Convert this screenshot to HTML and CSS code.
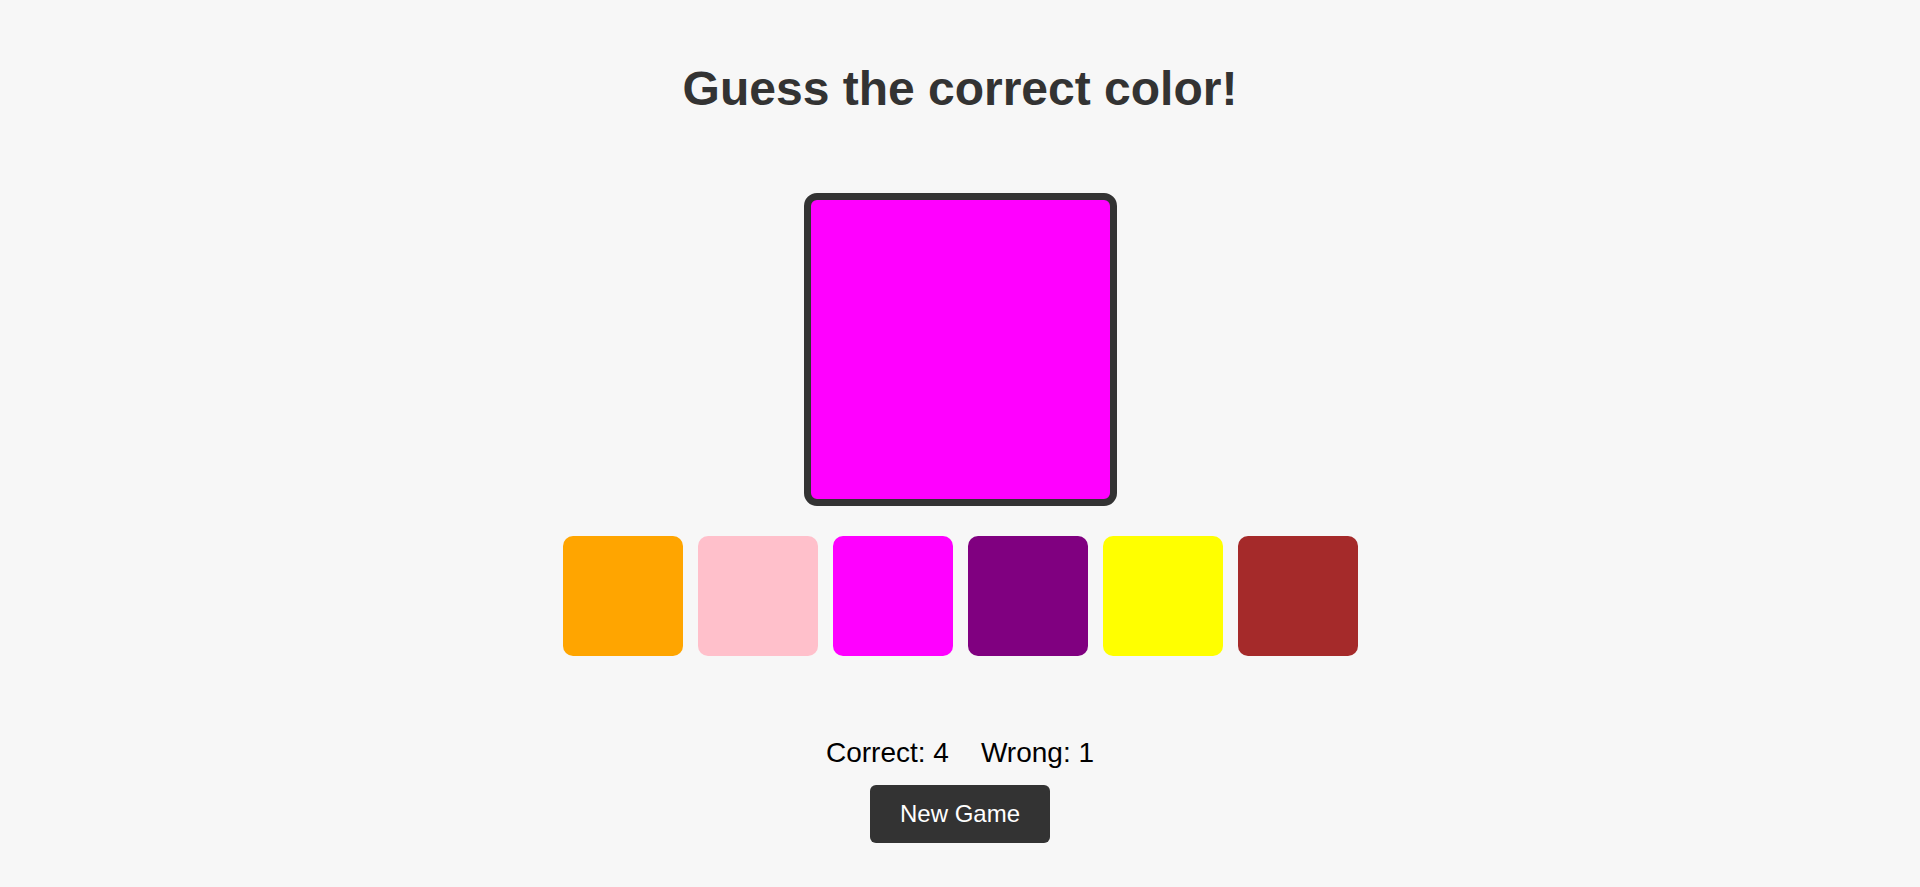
FILE: index.html
```html
<!DOCTYPE html>
<html lang="en">
<head>
<meta charset="utf-8">
<title>Guess the correct color!</title>
<link rel="stylesheet" href="styles.css">
</head>
<body>
<main class="game">
  <h1 class="title">Guess the correct color!</h1>
  <div class="target"></div>
  <div class="options">
    <div class="swatch orange"></div>
    <div class="swatch pink"></div>
    <div class="swatch magenta"></div>
    <div class="swatch purple"></div>
    <div class="swatch yellow"></div>
    <div class="swatch brown"></div>
  </div>
  <div class="stats"><span class="stat">Correct: 4</span><span class="stat">Wrong: 1</span></div>
  <button class="new-game">New Game</button>
</main>
</body>
</html>
```
FILE: styles.css
```css
html, body {
  margin: 0;
  padding: 0;
  background: #f7f7f7;
}
body {
  font-family: "Liberation Sans", Arial, sans-serif;
}
.game {
  display: flex;
  flex-direction: column;
  align-items: center;
  padding-top: 61px;
}
.title {
  margin: 0;
  font-size: 48px;
  line-height: 56px;
  font-weight: bold;
  color: #333;
}
.target {
  margin-top: 76px;
  width: 299px;
  height: 299px;
  border: 7px solid #333;
  border-radius: 13px;
  background: #ff00ff;
}
.options {
  margin-top: 30px;
  display: flex;
  gap: 15px;
}
.swatch {
  width: 120px;
  height: 120px;
  border-radius: 10px;
}
.orange { background: #ffa500; }
.pink { background: #ffc0cb; }
.magenta { background: #ff00ff; }
.purple { background: #800080; }
.yellow { background: #ffff00; }
.brown { background: #a52a2a; }
.stats {
  margin-top: 81px;
  display: flex;
  gap: 32px;
  font-size: 28px;
  line-height: 32px;
  color: #000;
}
.new-game {
  margin-top: 16px;
  font-family: "Liberation Sans", Arial, sans-serif;
  font-size: 24px;
  line-height: 28px;
  padding: 15px 30px;
  border: none;
  border-radius: 6px;
  background: #333;
  color: #fff;
  cursor: pointer;
}
```
